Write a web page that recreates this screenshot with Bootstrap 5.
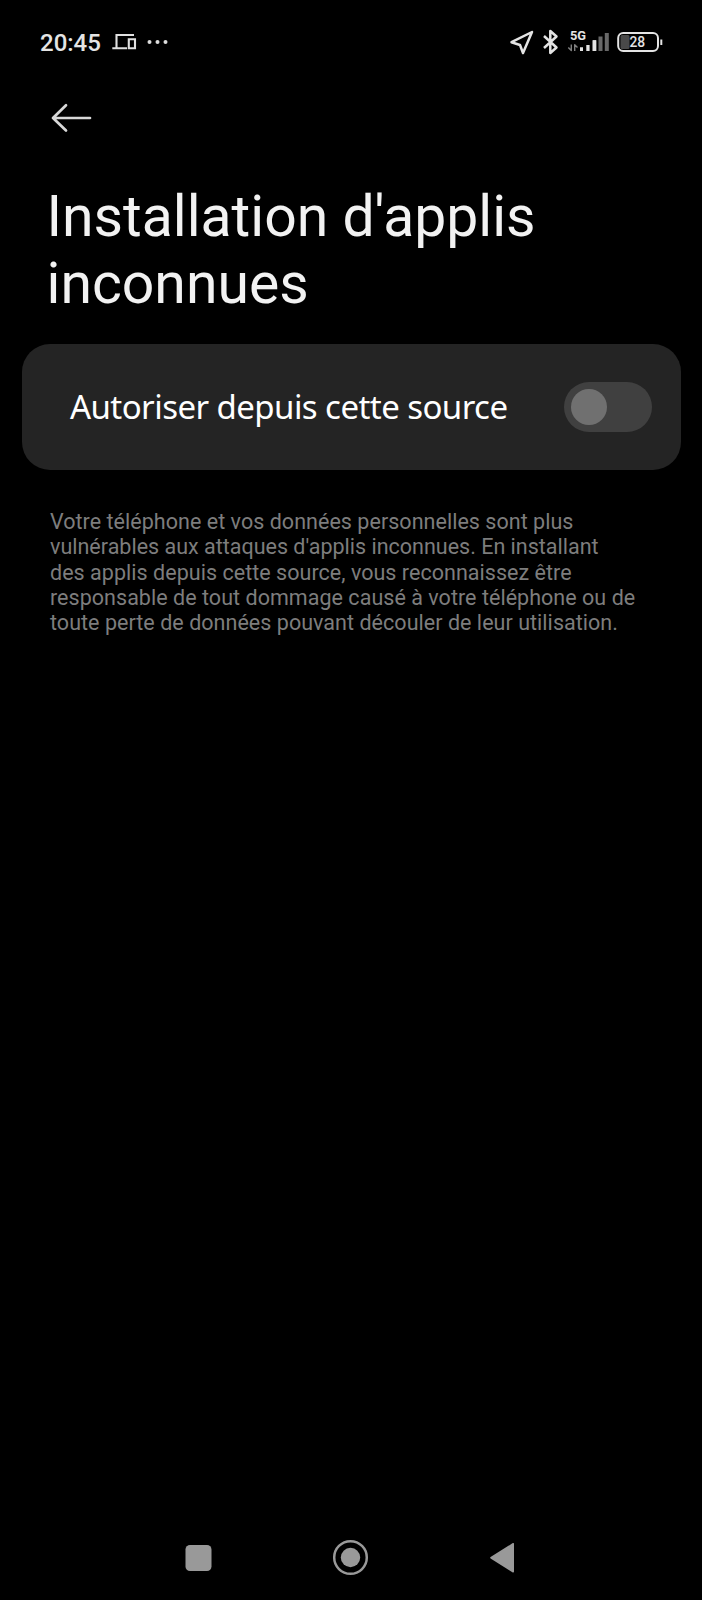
<!DOCTYPE html>
<html lang="fr">
<head>
<meta charset="utf-8">
<meta name="viewport" content="width=device-width, initial-scale=1">
<title>Installation d'applis inconnues</title>
<link rel="stylesheet" href="https://cdn.jsdelivr.net/npm/bootstrap@5.3.0/dist/css/bootstrap.min.css">
<style>
body{background:#000;color:#f2f2f2;font-family:Roboto,"Liberation Sans",sans-serif}
.screen{height:1600px}
svg{display:block;flex:none}
.status{height:84px;padding:0 38px 0 40px}
.clock{font-size:24px;font-weight:500;line-height:24px;width:61px;padding-top:1px;white-space:nowrap;color:#e4e4e4}
.back{height:68px;padding-left:50px}
.title{margin:31px 0 0 46.5px;font-size:57.1px;line-height:67px;font-weight:400}
.title span,.note span,.label{white-space:nowrap;display:inline-block}
.source{margin:27px 21px 0 21.5px;height:126px;border-radius:28px;background:#242424;padding:0 29px 0 48.5px}
.label{font-family:"Noto Sans",sans-serif;font-size:33px;letter-spacing:-.56px;color:#fff}
.switch{width:88px;height:50px;border-radius:25px;background:#404040;padding:7px}
.knob{width:36px;height:36px;background:#707070}
.note{margin:39px 0 0 50px;font-size:21.5px;line-height:25.3px;letter-spacing:.035px;color:#7d7d7d}
.note .tight{letter-spacing:0}
.keys{height:84px}
</style>
</head>
<body>
<main class="screen d-flex flex-column">
<header class="status d-flex align-items-center justify-content-between">
 <div class="d-flex align-items-center">
  <span class="clock">20:45</span>
  <svg class="ms-2" width="62" height="30" viewBox="109 27 62 30" fill="none" stroke="#e0e0e0" stroke-width="2.1"><path d="M134 35H116.5V48M112.3 48.3H127M128.8 39.2H135V48.3H128.8Z"/><g fill="#ddd" stroke="none"><circle cx="149.5" cy="42" r="2"/><circle cx="157.5" cy="42" r="2"/><circle cx="165.5" cy="42" r="2"/></g></svg>
 </div>
 <svg width="156" height="36" viewBox="508 24 156 36" fill="none" stroke="#e4e4e4" stroke-width="2.5" stroke-linejoin="round">
  <path d="M532 32L511.5 42.2L520 45L523 53Z"/>
  <path d="M544 36L556.5 47.5L550.3 53V31L556.5 36.5L544 48"/>
  <g fill="#e4e4e4" stroke="none"><path d="M580 47.3h3V51H580zM586.3 45h3.3v6h-3.3zM592.7 40.3h3.5V51H592.7z"/><path fill="#e4e4e4" d="M592.7 40.3h3.5V51h-3.5z"/><path fill="#686868" d="M598.5 36.5h4V51h-4zM604.8 33h4v18h-4z"/></g>
  <path stroke="#808080" stroke-width="1.4" d="M568.3 47.5L571.3 50.5V44.5M577.5 47.5L574.7 44.7V51"/>
  <text x="570" y="40.3" font-family="Roboto" font-weight="700" font-size="12.8" fill="#e4e4e4" stroke="none">5G</text>
  <rect x="620.5" y="35" width="9" height="14" rx="1.5" fill="#494949" stroke="none"/>
  <rect x="618.2" y="33" width="39.8" height="18" rx="5" stroke-width="2"/>
  <path d="M661.3 39.5V45" stroke-width="2"/>
  <text x="629.5" y="47" font-family="Roboto" font-weight="500" font-size="13.8" fill="#e4e4e4" stroke="none">28</text>
 </svg>
</header>
<div class="back d-flex align-items-center"><svg width="44" height="32" viewBox="50 102 44 32" fill="none" stroke="#d8d8d8" stroke-width="2.7" stroke-linecap="round" stroke-linejoin="round"><path d="M66 105.3L53 118L66 130.5M53 118H90"/></svg></div>
<h1 class="title mb-0"><span>Installation d'applis</span><br><span>inconnues</span></h1>
<section class="source d-flex align-items-center justify-content-between">
 <span class="label">Autoriser depuis cette source</span>
 <div class="switch" role="switch" aria-checked="false"><div class="knob rounded-circle"></div></div>
</section>
<p class="note mb-0"><span>Votre téléphone et vos données personnelles sont plus</span><br><span class="tight">vulnérables aux attaques d'applis inconnues. En installant</span><br><span>des applis depuis cette source, vous reconnaissez être</span><br><span>responsable de tout dommage causé à votre téléphone ou de</span><br><span>toute perte de données pouvant découler de leur utilisation.</span></p>
<nav class="keys mt-auto">
 <svg width="702" height="84" viewBox="0 1516 702 84" fill="#999"><rect x="185.5" y="1545" width="26" height="26" rx="4.5"/><circle cx="350.5" cy="1557.5" r="9.7"/><circle cx="350.5" cy="1557.5" r="16.3" fill="none" stroke="#999" stroke-width="2.5"/><path d="M491 1557.8L513.2 1543.8V1571.8Z" stroke="#999" stroke-width="1.6" stroke-linejoin="round"/></svg>
</nav>
</main>
<script src="https://cdn.jsdelivr.net/npm/bootstrap@5.3.0/dist/js/bootstrap.bundle.min.js"></script>
</body>
</html>
